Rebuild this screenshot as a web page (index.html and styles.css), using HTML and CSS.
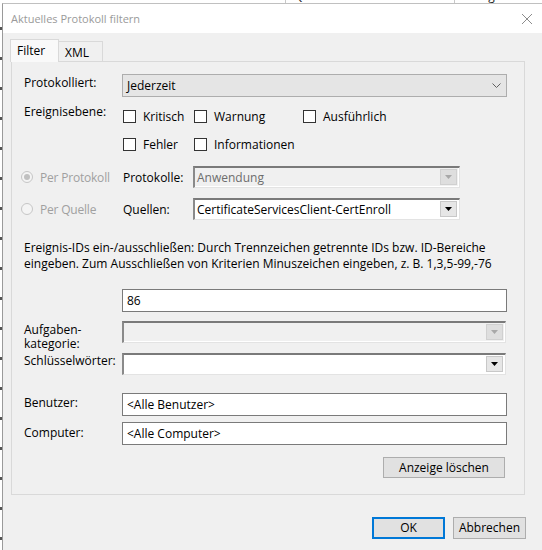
FILE: index.html
```html
<!DOCTYPE html>
<html lang="de">
<head>
<meta charset="utf-8">
<title>Aktuelles Protokoll filtern</title>
<link rel="stylesheet" href="styles.css">
</head>
<body>
<div class="bgstrip">
  <span class="bgcol c1">Datum und Uhrzeit</span>
  <span class="bgsep"></span>
  <span class="bgcol c2">Quelle</span>
  <span class="bgsep"></span>
  <span class="bgcol c3">Ereignis-ID</span>
</div>
<div class="main">
  <div class="bgleft"></div>
  <div class="dialog">
    <div class="titlebar">
      <span class="title">Aktuelles Protokoll filtern</span>
      <svg class="close" width="12" height="12" viewBox="0 0 12 12"><path d="M1 1L11 11M11 1L1 11" stroke="#8c8c8c" stroke-width="1" fill="none"/></svg>
    </div>
    <div class="content">
      <div class="tabs">
        <div class="tab active">Filter</div>
        <div class="tab">XML</div>
      </div>
      <div class="panel">
        <div class="row r-log">
          <div class="lbl">Protokolliert:</div>
          <div class="combo-w10">
            <span class="val">Jederzeit</span>
            <svg class="chev" width="9" height="5" viewBox="0 0 9 5"><path d="M0.5 0.5L4.5 4.5L8.5 0.5" stroke="#606060" stroke-width="1" fill="none"/></svg>
          </div>
        </div>
        <div class="row r-level">
          <div class="lbl">Ereignisebene:</div>
          <div class="checks">
            <div class="chk"><span class="box"></span>Kritisch</div>
            <div class="chk"><span class="box"></span>Warnung</div>
            <div class="chk"><span class="box"></span>Ausführlich</div>
            <div class="chk"><span class="box"></span>Fehler</div>
            <div class="chk"><span class="box"></span>Informationen</div>
          </div>
        </div>
        <div class="row r-src r-proto">
          <div class="radio-col"><span class="radio checked"></span><span class="dis">Per Protokoll</span></div>
          <div class="lbl2">Protokolle:</div>
          <div class="combo3d disabled">
            <span class="val">Anwendung</span>
            <span class="dd"><svg width="7" height="4" viewBox="0 0 7 4"><path d="M0 0H7L3.5 4Z" fill="#a8a8a8"/></svg></span>
          </div>
        </div>
        <div class="row r-src r-quelle">
          <div class="radio-col"><span class="radio"></span><span class="dis">Per Quelle</span></div>
          <div class="lbl2">Quellen:</div>
          <div class="combo3d">
            <span class="val">CertificateServicesClient-CertEnroll</span>
            <span class="dd"><svg width="7" height="4" viewBox="0 0 7 4"><path d="M0 0H7L3.5 4Z" fill="#000"/></svg></span>
          </div>
        </div>
        <p class="hint">Ereignis-IDs ein-/ausschließen: Durch Trennzeichen getrennte IDs bzw. ID-Bereiche<br>eingeben. Zum Ausschließen von Kriterien Minuszeichen eingeben, z. B. 1,3,5-99,-76</p>
        <div class="row r-ids">
          <div class="lbl"></div>
          <div class="input">86</div>
        </div>
        <div class="row r-task">
          <div class="lbl two">Aufgaben-<br>kategorie:</div>
          <div class="combo3d disabled wide">
            <span class="val"></span>
            <span class="dd"><svg width="7" height="4" viewBox="0 0 7 4"><path d="M0 0H7L3.5 4Z" fill="#a8a8a8"/></svg></span>
          </div>
        </div>
        <div class="row r-key">
          <div class="lbl">Schlüsselwörter:</div>
          <div class="combo3d wide">
            <span class="val"></span>
            <span class="dd"><svg width="7" height="4" viewBox="0 0 7 4"><path d="M0 0H7L3.5 4Z" fill="#000"/></svg></span>
          </div>
        </div>
        <div class="row r-user">
          <div class="lbl">Benutzer:</div>
          <div class="input">&lt;Alle Benutzer&gt;</div>
        </div>
        <div class="row r-comp">
          <div class="lbl">Computer:</div>
          <div class="input">&lt;Alle Computer&gt;</div>
        </div>
        <div class="clear-row"><button class="btn clear">Anzeige löschen</button></div>
      </div>
      <div class="footer">
        <button class="btn ok">OK</button>
        <button class="btn cancel">Abbrechen</button>
      </div>
    </div>
  </div>
</div>
</body>
</html>
```
FILE: styles.css
```css
* { box-sizing: border-box; }
html, body { margin: 0; padding: 0; }
body {
  width: 542px;
  height: 550px;
  overflow: hidden;
  background: #fff;
  font-family: "Segoe UI", "Open Sans", "Noto Sans", sans-serif;
  font-size: 12px;
  color: #000;
}
.bgstrip {
  height: 3px;
  overflow: hidden;
  display: flex;
  background: #fff;
}
.bgcol {
  display: block;
  margin-top: -10px;
  line-height: 12px;
  font-size: 12px;
  color: #222;
}
.c1 { margin-left: 105px; width: 180px; }
.c2 { margin-left: 8px; width: 160px; }
.c3 { margin-left: 12px; }
.bgsep { width: 1px; background: #c8c8c8; }
.main {
  display: flex;
  height: 547px;
}
.bgleft {
  width: 2px;
  background-image: repeating-linear-gradient(#fff 0 24px, #555 24px 27px, #fff 27px 30px);
}
.dialog {
  flex: 1;
  border-left: 1px solid #9a9a9a;
  border-top: 1px solid #c0c0c0;
  background: #f0f0f0;
  display: flex;
  flex-direction: column;
}
.titlebar {
  height: 29px;
  background: #fff;
  display: flex;
  align-items: center;
  justify-content: space-between;
  padding: 0 9px 0 8px;
}
.title { color: #9a9a9a; font-size: 11px; }
.close { display: block; }
.content {
  padding: 6px 0 0 8px;
}
.tabs {
  display: flex;
  align-items: flex-end;
  height: 23px;
  margin-bottom: -1px;
  position: relative;
  z-index: 1;
}
.tab {
  border: 1px solid #d9d9d9;
  border-bottom: none;
  background: #f0f0f0;
  line-height: 18px;
}
.tab.active {
  margin-left: -1px;
  width: 49px;
  height: 23px;
  padding: 2px 0 0 6px;
  background: #f9f9f9;
}
.tab:not(.active) {
  width: 44px;
  height: 20px;
  margin-bottom: 1px;
  border-left: none;
  padding: 2px 0 0 6px;
}
.panel {
  width: 514px;
  height: 434px;
  border: 1px solid #d9d9d9;
  background: #f0f0f0;
  padding: 0 17px 0 12px;
}
.row { display: flex; align-items: flex-start; }
.lbl { width: 98px; flex: none; line-height: 16px; }
.r-log { margin-top: 12px; }
.r-log .lbl { padding-top: 1px; }
.combo-w10 {
  width: 385px;
  height: 23px;
  background: #e5e5e5;
  border: 1px solid #adadad;
  display: flex;
  align-items: center;
  justify-content: space-between;
  padding: 0 5px 0 4px;
}
.chev { display: block; }
.r-level { margin-top: 5px; }
.r-level .lbl { padding-top: 2px; }
.checks {
  display: grid;
  grid-template-columns: 71px 109px auto;
  grid-auto-rows: 28px;
}
.chk { display: flex; align-items: center; gap: 7px; padding-left: 1px; }
.box {
  width: 13px; height: 13px;
  border: 1px solid #333;
  background: #fff;
  flex: none;
}
.r-src { align-items: center; height: 22px; }
.r-proto { margin-top: 8px; }
.r-quelle { margin-top: 10px; }
.radio-col {
  width: 102px;
  flex: none;
  display: flex;
  align-items: center;
  gap: 7px;
  margin-left: -3px;
}
.radio {
  width: 12px; height: 12px;
  border-radius: 50%;
  border: 1px solid #c6c6c6;
  background: #f4f4f4;
  flex: none;
  display: flex;
  align-items: center;
  justify-content: center;
}
.radio.checked::after {
  content: "";
  width: 6px; height: 6px;
  border-radius: 50%;
  background: #c0c0c0;
}
.dis { color: #a0a0a0; letter-spacing: -0.2px; }
.lbl2 { width: 70px; flex: none; }
.combo3d {
  width: 267px;
  height: 22px;
  background: #fff;
  border-top: 2px solid #7a7a7a;
  border-left: 2px solid #8a8a8a;
  border-bottom: 1px solid #e3e3e3;
  border-right: 1px solid #e3e3e3;
  box-shadow: inset -1px -1px 0 #fff;
  display: flex;
  align-items: center;
  justify-content: space-between;
  padding: 0 2px 1px 1px;
}
.combo3d.disabled { background: #f0f0f0; color: #6d6d6d; }
.combo3d.wide { width: 384px; }
.combo3d .val { padding-left: 1px; }
.dd {
  width: 17px; height: 16px;
  background: #e6e6e6;
  border: 1px solid #c8c8c8;
  display: flex;
  align-items: center;
  justify-content: center;
}
.dd svg { display: block; }
.combo3d.disabled .dd { background: #dedede; border-color: #d0d0d0; }
.hint {
  margin: 20px 0 0 0;
  line-height: 16px;
}
.input {
  width: 385px;
  height: 23px;
  background: #fff;
  border: 1px solid #7a7a7a;
  padding: 2px 0 0 4px;
  line-height: 17px;
}
.r-ids { margin-top: 17px; }
.r-task { margin-top: 9px; }
.lbl.two { line-height: 14px; padding-top: 2px; height: 31px; }
.r-key { margin-top: 1px; }
.r-key .lbl { padding-top: 1px; line-height: 14px; }
.r-user { margin-top: 18px; }
.r-user .lbl { padding-top: 2px; }
.r-comp { margin-top: 6px; }
.r-comp .lbl { padding-top: 3px; }
.clear-row {
  display: flex;
  justify-content: flex-end;
  margin-top: 12px;
  padding-right: 2px;
}
.btn {
  font-family: inherit;
  font-size: 12px;
  color: #000;
  background: #e1e1e1;
  border: 1px solid #adadad;
  padding: 0;
  margin: 0;
  line-height: 16px;
}
.clear { width: 122px; height: 21px; }
.footer {
  width: 515px;
  display: flex;
  justify-content: flex-end;
  gap: 8px;
  margin-top: 22px;
}
.ok { width: 73px; height: 22px; border: 2px solid #0078d7; }
.cancel { width: 73px; height: 22px; }
```
